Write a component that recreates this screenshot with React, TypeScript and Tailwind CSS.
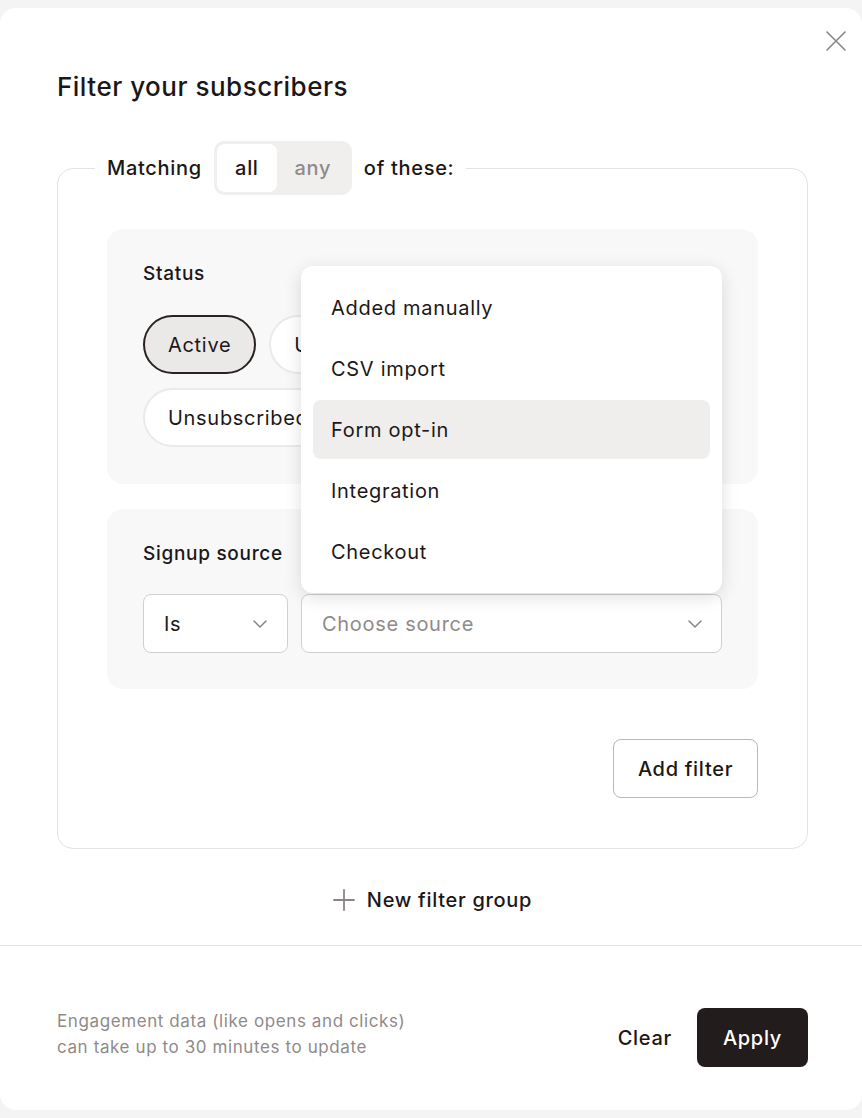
import React from 'react';

const statusOptions = [
  { label: 'Active', selected: true },
  { label: 'Unconfirmed', selected: false },
  { label: 'Bounced', selected: false },
  { label: 'Unsubscribed', selected: false },
  { label: 'Complained', selected: false },
];

const sourceOptions = ['Added manually', 'CSV import', 'Form opt-in', 'Integration', 'Checkout'];

const Chevron = () => (
  <svg width="14" height="8" viewBox="0 0 14 8" fill="none" className="shrink-0">
    <path d="M1 1l6 6 6-6" stroke="#8a8484" strokeWidth="1.5" strokeLinecap="round" strokeLinejoin="round" />
  </svg>
);

const App: React.FC = () => {
  const highlighted = 'Form opt-in';

  return (
    <div
      className="min-h-screen bg-[#f4f4f4] pt-2 tracking-[0.7px] text-[#1c1717]"
      style={{ fontFamily: 'Inter, "Noto Sans", sans-serif' }}
    >
      <div className="relative rounded-2xl bg-white">
        {/* Close */}
        <button className="absolute right-[16px] top-[23px] p-0" aria-label="Close">
          <svg width="20" height="20" viewBox="0 0 20 20" fill="none">
            <path d="M1 1l18 18M19 1L1 19" stroke="#8a8585" strokeWidth="1.6" strokeLinecap="round" />
          </svg>
        </button>

        <div className="pl-[57px] pr-[54px] pt-[63px]">
          <h1 className="text-[26px] font-medium leading-8 tracking-[0.5px]">Filter your subscribers</h1>

          <fieldset className="mt-[38px] rounded-2xl border border-[#e4e2e2] p-0">
            <legend className="ml-[37px] flex items-center gap-3 px-3">
              <span className="text-[20px] font-medium">Matching</span>
              <div className="flex h-[54px] items-center rounded-[10px] bg-[#f0efee] p-[3px]">
                <span className="flex h-[48px] w-[60px] items-center justify-center rounded-[8px] bg-white text-[20px] font-medium">
                  all
                </span>
                <span className="flex h-[48px] w-[72px] items-center justify-center text-[20px] font-medium text-[#8f8a8a]">
                  any
                </span>
              </div>
              <span className="text-[20px] font-medium">of these:</span>
            </legend>

            <div className="px-[49px] pb-[50px] pt-[34px]">
              {/* Status */}
              <div className="rounded-2xl bg-[#f8f8f8] px-9 pb-[37px] pt-[33px]">
                <div className="mb-[29px] text-[19px] font-medium leading-6">Status</div>
                <div className="flex flex-wrap gap-x-[13px] gap-y-[14px]">
                  {statusOptions.map(opt => (
                    <button
                      key={opt.label}
                      className={`flex h-[59px] items-center rounded-full px-[23px] text-[20px] ${
                        opt.selected
                          ? 'border-2 border-[#2a2222] bg-[#ebe8e8]'
                          : 'border-2 border-[#ebe9e9] bg-white'
                      }`}
                    >
                      {opt.label}
                    </button>
                  ))}
                </div>
              </div>

              {/* Signup source */}
              <div className="mt-[25px] rounded-2xl bg-[#f8f8f8] px-9 pb-9 pt-[33px]">
                <div className="mb-[28px] text-[19px] font-medium leading-6">Signup source</div>
                <div className="flex gap-[13px]">
                  <div className="flex h-[59px] w-[145px] items-center justify-between rounded-lg border border-[#d3cfcf] bg-white pl-5 pr-5 text-[20px]">
                    <span>Is</span>
                    <Chevron />
                  </div>
                  <div className="relative flex-1">
                    <div className="flex h-[59px] items-center justify-between rounded-lg border border-[#d3cfcf] bg-white pl-5 pr-[19px] text-[20px] text-[#8f8a8a]">
                      <span>Choose source</span>
                      <Chevron />
                    </div>

                    {/* Dropdown menu */}
                    <div className="absolute bottom-full left-0 right-0 mb-px flex flex-col gap-[2px] rounded-xl bg-white px-3 pb-[12px] pt-3 shadow-[0_4px_18px_rgba(0,0,0,0.13)]">
                      {sourceOptions.map(opt => (
                        <div
                          key={opt}
                          className={`flex h-[59px] items-center rounded-lg pl-[18px] text-[20px] ${
                            opt === highlighted ? 'bg-[#efeeec]' : ''
                          }`}
                        >
                          {opt}
                        </div>
                      ))}
                    </div>
                  </div>
                </div>
              </div>

              <div className="mt-[50px] flex justify-end">
                <button className="flex h-[59px] w-[145px] items-center justify-center rounded-lg border border-[#bcb7b7] text-[20px] font-medium">
                  Add filter
                </button>
              </div>
            </div>
          </fieldset>

          <div className="mb-[31px] mt-[37px] flex justify-center">
            <button className="flex h-7 items-center gap-3 text-[20px] font-medium">
              <svg width="22" height="22" viewBox="0 0 22 22" fill="none">
                <path d="M11 1v20M1 11h20" stroke="#8a8484" strokeWidth="1.8" strokeLinecap="round" />
              </svg>
              New filter group
            </button>
          </div>
        </div>

        <div className="border-t border-[#e6e4e4]" />

        {/* Footer */}
        <div className="flex items-start justify-between pb-[43px] pl-[57px] pr-[54px] pt-[62px]">
          <p className="text-[17px] leading-[26px] tracking-[0.6px] text-[#8f8a8a]">
            Engagement data (like opens and clicks)
            <br />
            can take up to 30 minutes to update
          </p>
          <div className="flex items-center gap-[25px]">
            <button className="text-[20px] font-medium">Clear</button>
            <button className="flex h-[59px] items-center rounded-lg bg-[#231c1c] px-[26px] text-[20px] font-medium text-white">
              Apply
            </button>
          </div>
        </div>
      </div>
    </div>
  );
};

export default App;
